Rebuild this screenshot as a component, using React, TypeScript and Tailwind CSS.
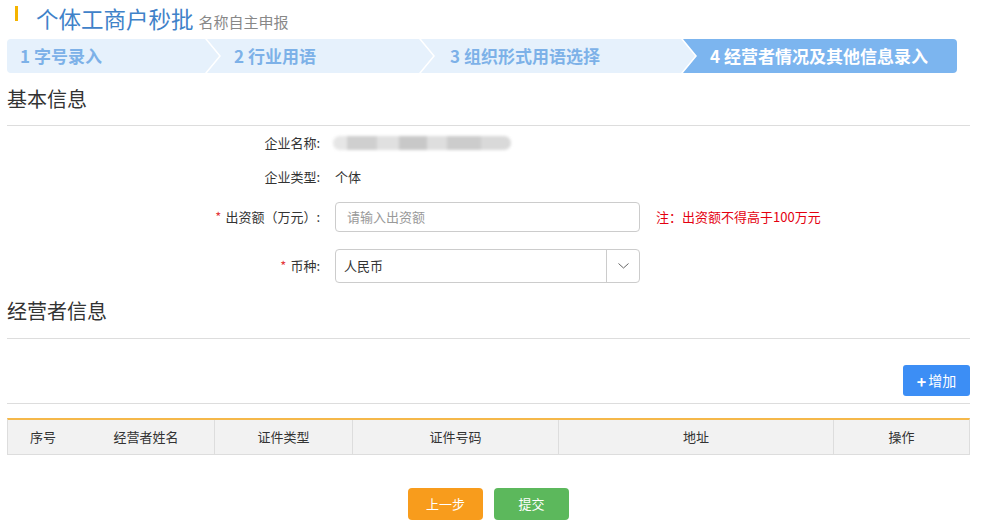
import React from "react";

const font = { fontFamily: '"Microsoft YaHei", "Noto Sans CJK SC", "Noto Sans", sans-serif' };

function Steps() {
  return (
    <div className="flex h-[34px] ml-[7px] font-bold text-[17px]">
      <div className="w-[212px] h-full flex items-center pl-[13px] bg-[#e6f1fc] text-[#7db1e8] rounded-l-[4px] [clip-path:polygon(0_0,calc(100%_-_14px)_0,100%_50%,calc(100%_-_14px)_100%,0_100%)]">
        1 字号录入
      </div>
      <div className="w-[226px] -ml-[12px] h-full flex items-center pl-[27px] bg-[#e6f1fc] text-[#7db1e8] [clip-path:polygon(0_0,calc(100%_-_14px)_0,100%_50%,calc(100%_-_14px)_100%,0_100%,14px_50%)]">
        2 行业用语
      </div>
      <div className="w-[274px] -ml-[12px] h-full flex items-center pl-[29px] bg-[#e6f1fc] text-[#7db1e8] [clip-path:polygon(0_0,calc(100%_-_14px)_0,100%_50%,calc(100%_-_14px)_100%,0_100%,14px_50%)]">
        3 组织形式用语选择
      </div>
      <div className="w-[274px] -ml-[12px] h-full flex items-center pl-[27px] bg-[#7cb5ef] text-white rounded-r-[4px] [clip-path:polygon(0_0,100%_0,100%_100%,0_100%,14px_50%)]">
        4 经营者情况及其他信息录入
      </div>
    </div>
  );
}

function Label({ children, req }: { children: React.ReactNode; req?: boolean }) {
  return (
    <div className="w-[313px] text-right text-[13px] text-[#333] shrink-0">
      {req && <span className="text-[#e4393c] mr-[4px]">*</span>}
      {children}
    </div>
  );
}

export default function App() {
  return (
    <div style={font} className="w-[1000px] h-[527px] bg-white overflow-hidden text-[#333]">
      <div className="flex items-center h-[36px] mb-[3px]">
        <div className="w-[3px] h-[15px] bg-[#f5b400] ml-[15px] mb-[10px]" />
        <div className="flex items-baseline ml-[18px]">
          <span className="text-[22.5px] text-[#3f82c9] leading-none">个体工商户秒批</span>
          <span className="text-[15px] text-[#888] ml-[5px] leading-none">名称自主申报</span>
        </div>
      </div>
      <Steps />
      <div className="px-[7px] w-[977px]">
        <div className="h-[53px] flex items-center text-[20px] text-[#333] border-b border-[#dddddd]">基本信息</div>

        <div className="flex items-center h-[34px]">
          <Label>企业名称:</Label>
          <div className="ml-[13px] flex h-[14px] w-[178px] blur-[1.5px] rounded-full overflow-hidden">
            <div className="w-[14px] bg-[#e6e6e6]" />
            <div className="w-[30px] bg-[#cfcfcf]" />
            <div className="w-[22px] bg-[#e0e0e0]" />
            <div className="w-[28px] bg-[#c8c8c8]" />
            <div className="w-[20px] bg-[#dedede]" />
            <div className="w-[34px] bg-[#cccccc]" />
            <div className="w-[30px] bg-[#d9d9d9]" />
          </div>
        </div>
        <div className="flex items-center h-[34px]">
          <Label>企业类型:</Label>
          <div className="ml-[15px] text-[13px] text-[#333]">个体</div>
        </div>
        <div className="flex items-center h-[30px] mt-[8px]">
          <Label req>出资额（万元）:</Label>
          <div className="ml-[15px] w-[305px] h-[30px] border border-[#cccccc] rounded-[4px] flex items-center pl-[11px] text-[13px] text-[#999]">
            请输入出资额
          </div>
          <div className="ml-[16px] text-[13px] text-[#e4000f]">注：出资额不得高于100万元</div>
        </div>
        <div className="flex items-center h-[34px] mt-[17px]">
          <Label req>币种:</Label>
          <div className="ml-[15px] w-[305px] h-[34px] border border-[#cccccc] rounded-[4px] flex items-center text-[13px] text-[#333]">
            <div className="flex-1 pl-[8px]">人民币</div>
            <div className="w-[33px] h-full border-l border-[#cccccc] flex items-center justify-center">
              <svg width="11" height="6" viewBox="0 0 11 6" fill="none">
                <path d="M0.5 0.5 L5.5 5 L10.5 0.5" stroke="#666" strokeWidth="1" />
              </svg>
            </div>
          </div>
        </div>

        <div className="h-[56px] flex items-center text-[20px] text-[#333] border-b border-[#dddddd]">经营者信息</div>

        <div className="flex justify-end pt-[26px] pb-[7px] border-b border-[#dddddd]">
          <button className="w-[67px] h-[31px] bg-[#3c8ef5] text-white text-[14px] rounded-[3px] flex items-center justify-center">
            <span className="font-bold text-[16px] mr-[2px] leading-none">+</span>增加
          </button>
        </div>

        <div className="mt-[14px] flex h-[37px] bg-[#f2f2f2] border-t-2 border-t-[#f5b84a] border-b border-x border-[#dddddd] text-[13px] text-[#333]">
          <div className="w-[206px] flex items-center">
            <div className="w-[70px] text-center">序号</div>
            <div className="flex-1 text-center">经营者姓名</div>
          </div>
          <div className="w-[138px] border-l border-[#dddddd] flex items-center justify-center">证件类型</div>
          <div className="w-[206px] border-l border-[#dddddd] flex items-center justify-center">证件号码</div>
          <div className="w-[275px] border-l border-[#dddddd] flex items-center justify-center">地址</div>
          <div className="flex-1 border-l border-[#dddddd] flex items-center justify-center">操作</div>
        </div>

        <div className="mt-[33px] flex justify-center gap-[11px]">
          <button className="w-[75px] h-[32px] bg-[#f89c1c] text-white text-[13px] rounded-[4px]">上一步</button>
          <button className="w-[75px] h-[32px] bg-[#5cb85c] text-white text-[13px] rounded-[4px]">提交</button>
        </div>
      </div>
    </div>
  );
}
